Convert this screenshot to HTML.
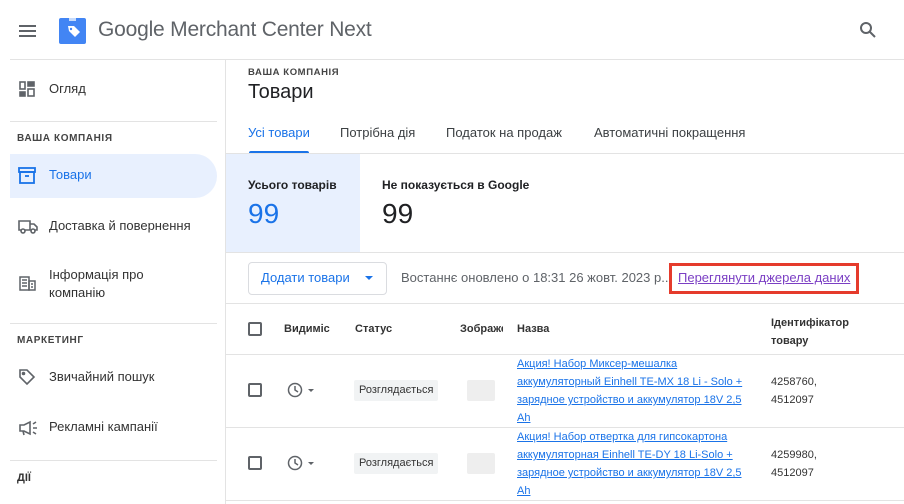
<!DOCTYPE html>
<html><head><meta charset="utf-8"><style>
*{margin:0;padding:0;box-sizing:border-box}
body{width:904px;height:504px;overflow:hidden;background:#fff;font-family:"Liberation Sans","DejaVu Sans",sans-serif;color:#3c4043;position:relative}
.a{position:absolute;white-space:nowrap}
.hl{position:absolute;height:1px;background:#e3e3e3}
.cap{font-size:10px;font-weight:bold;letter-spacing:.6px;color:#444}
.nav{font-size:13px;color:#333}
.ic{position:absolute}
.cb{position:absolute;width:14px;height:14px;border:2px solid #5f6368;border-radius:2px}
.th{font-size:11px;color:#333;font-weight:bold}
.lnk{font-size:11px;color:#1a73e8;text-decoration:underline;line-height:18px}
.chip{position:absolute;background:#f1f3f4;font-size:11px;color:#333;padding:0 5px;height:21px;line-height:21px;border-radius:2px}
.img{position:absolute;width:28px;height:21px;background:#eee;border-radius:2px}
</style></head><body>
<!-- header -->
<div class="a" style="left:19px;top:25px;width:17px;height:2px;background:#5f6368;box-shadow:0 5px 0 #5f6368,0 10px 0 #5f6368"></div>
<svg class="ic" style="left:59px;top:17px" width="27" height="27" viewBox="0 0 27 27"><rect x="0" y="1" width="27" height="26" rx="2" fill="#4285f4"/><rect x="10" y="1" width="7" height="3" fill="#fff" opacity=".7"/><path d="M9 9l6 0 6 6-5 5-6-6z" fill="#fff"/><circle cx="12" cy="12" r="1.2" fill="#4285f4"/></svg>
<div class="a" style="left:98px;top:18px;font-size:21px;letter-spacing:-0.2px;color:#5f6368">Google Merchant Center Next</div>
<svg class="ic" style="left:859px;top:21px" width="18" height="18" viewBox="0 0 18 18"><circle cx="7" cy="7" r="5" fill="none" stroke="#5f6368" stroke-width="2"/><path d="M11 11l5 5" stroke="#5f6368" stroke-width="2"/></svg>
<div class="hl" style="left:10px;top:59px;width:894px"></div>
<!-- sidebar -->
<div class="a" style="left:225px;top:60px;width:1px;height:444px;background:#e3e3e3"></div>
<svg class="ic" style="left:19px;top:81px" width="16" height="16" viewBox="0 0 16 16" fill="none" stroke="#5f6368" stroke-width="1.6"><rect x="1" y="1" width="5" height="7"/><rect x="9" y="1" width="6" height="4" fill="#5f6368"/><rect x="1" y="11" width="5" height="4" fill="#5f6368"/><rect x="9" y="8" width="6" height="7"/></svg>
<div class="a nav" style="left:49px;top:81px">Огляд</div>
<div class="hl" style="left:10px;top:121px;width:207px"></div>
<div class="a cap" style="left:17px;top:133px">ВАША КОМПАНІЯ</div>
<div class="a" style="left:10px;top:154px;width:207px;height:44px;background:#e8f0fe;border-radius:0 22px 22px 0"></div>
<svg class="ic" style="left:18px;top:167px" width="18" height="17" viewBox="0 0 18 17" fill="none" stroke="#1a73e8" stroke-width="1.8"><rect x="1" y="1" width="16" height="4"/><rect x="2" y="5" width="14" height="11"/><path d="M7 9h4"/></svg>
<div class="a nav" style="left:49px;top:167px;color:#1a73e8">Товари</div>
<svg class="ic" style="left:18px;top:219px" width="20" height="15" viewBox="0 0 20 15" fill="none" stroke="#5f6368" stroke-width="1.6"><path d="M1 2h11v9H1zM12 5h4l3 3v3h-7"/><circle cx="5" cy="12" r="2" fill="#fff"/><circle cx="15" cy="12" r="2" fill="#fff"/></svg>
<div class="a nav" style="left:49px;top:218px">Доставка й повернення</div>
<svg class="ic" style="left:19px;top:276px" width="17" height="15" viewBox="0 0 17 15" fill="none" stroke="#5f6368" stroke-width="1.5"><rect x="1" y="1" width="9" height="13"/><rect x="10" y="5" width="6" height="9"/><path d="M3 4h5M3 7h5M3 10h5M12 8h2M12 11h2"/></svg>
<div class="a nav" style="left:49px;top:266px;line-height:18px">Інформація про<br>компанію</div>
<div class="hl" style="left:10px;top:323px;width:207px"></div>
<div class="a cap" style="left:17px;top:335px">МАРКЕТИНГ</div>
<svg class="ic" style="left:18px;top:368px" width="18" height="18" viewBox="0 0 18 18" fill="none" stroke="#5f6368" stroke-width="1.6"><path d="M2 2h7l7 7-7 7-7-7z"/><circle cx="5.5" cy="5.5" r="1" fill="#5f6368"/></svg>
<div class="a nav" style="left:49px;top:369px">Звичайний пошук</div>
<svg class="ic" style="left:18px;top:420px" width="20" height="16" viewBox="0 0 20 16" fill="none" stroke="#5f6368" stroke-width="1.6"><path d="M2 5h4l6-3v12l-6-3H2zM5 11l1 4M15 4l3-2M15 8h4M15 12l3 2"/></svg>
<div class="a nav" style="left:49px;top:419px">Рекламні кампанії</div>
<div class="hl" style="left:10px;top:460px;width:207px"></div>
<div class="a nav" style="left:17px;top:472px;font-size:11px;font-weight:bold">ДІЇ</div>
<!-- main -->
<div class="a cap" style="left:248px;top:67px;font-size:9.5px">ВАША КОМПАНІЯ</div>
<div class="a" style="left:248px;top:81px;font-size:20px;color:#202124">Товари</div>
<div class="a" style="left:248px;top:125px;font-size:13px;color:#1a73e8">Усі товари</div>
<div class="a" style="left:249px;top:151px;width:60px;height:3px;background:#1a73e8;border-radius:2px 2px 0 0"></div>
<div class="a" style="left:340px;top:125px;font-size:13px">Потрібна дія</div>
<div class="a" style="left:446px;top:125px;font-size:13px">Податок на продаж</div>
<div class="a" style="left:594px;top:125px;font-size:13px">Автоматичні покращення</div>
<div class="hl" style="left:226px;top:153px;width:678px"></div>
<div class="a" style="left:226px;top:154px;width:134px;height:98px;background:#e8f0fe"></div>
<div class="a" style="left:248px;top:178px;font-size:12px;font-weight:bold;color:#202124">Усього товарів</div>
<div class="a" style="left:248px;top:198px;font-size:28px;color:#1a73e8">99</div>
<div class="a" style="left:382px;top:178px;font-size:12px;font-weight:bold;color:#202124">Не показується в Google</div>
<div class="a" style="left:382px;top:198px;font-size:28px;color:#202124">99</div>
<div class="hl" style="left:226px;top:252px;width:678px"></div>
<div class="a" style="left:248px;top:262px;width:139px;height:33px;border:1px solid #dadce0;border-radius:4px"></div>
<div class="a" style="left:261px;top:270px;font-size:13px;color:#1a73e8">Додати товари</div>
<div class="a" style="left:365px;top:276px;border:4px solid transparent;border-top-color:#1a73e8;border-bottom:0"></div>
<div class="a" style="left:401px;top:270px;font-size:13px;color:#5f6368">Востаннє оновлено о 18:31 26 жовт. 2023 р..</div>
<div class="a" style="left:669px;top:263px;width:190px;height:31px;border:3px solid #e53b2c"></div>
<div class="a" style="left:678px;top:270px;font-size:13px;color:#7b3fc4;text-decoration:underline">Переглянути джерела даних</div>
<div class="hl" style="left:226px;top:303px;width:678px"></div>
<div class="cb" style="left:248px;top:322px"></div>
<div class="a th" style="left:284px;top:323px">Видиміс</div>
<div class="a th" style="left:355px;top:323px">Статус</div>
<div class="a th" style="left:460px;top:323px;width:43px;overflow:hidden">Зображення</div>
<div class="a th" style="left:517px;top:323px">Назва</div>
<div class="a th" style="left:771px;top:314px;line-height:18px">Ідентифікатор<br>товару</div>
<div class="hl" style="left:226px;top:354px;width:678px"></div>
<div class="cb" style="left:248px;top:383px"></div>
<svg class="ic" style="left:287px;top:382px" width="30" height="16" viewBox="0 0 30 16" fill="none" stroke="#5f6368" stroke-width="1.5"><circle cx="8" cy="8" r="6.5"/><path d="M8 4v4l3 2"/><path d="M21 7h6l-3 3z" fill="#5f6368" stroke="none"/></svg>
<div class="chip" style="left:354px;top:380px">Розглядається</div>
<div class="img" style="left:467px;top:380px"></div>
<div class="a lnk" style="left:517px;top:355px">Акция! Набор Миксер-мешалка<br>аккумуляторный Einhell TE-MX 18 Li - Solo +<br>зарядное устройство и аккумулятор 18V 2,5<br>Ah</div>
<div class="a" style="left:771px;top:373px;font-size:11px;line-height:18px;color:#333">4258760,<br>4512097</div>
<div class="hl" style="left:226px;top:427px;width:678px"></div>
<div class="cb" style="left:248px;top:456px"></div>
<svg class="ic" style="left:287px;top:455px" width="30" height="16" viewBox="0 0 30 16" fill="none" stroke="#5f6368" stroke-width="1.5"><circle cx="8" cy="8" r="6.5"/><path d="M8 4v4l3 2"/><path d="M21 7h6l-3 3z" fill="#5f6368" stroke="none"/></svg>
<div class="chip" style="left:354px;top:453px">Розглядається</div>
<div class="img" style="left:467px;top:453px"></div>
<div class="a lnk" style="left:517px;top:428px">Акция! Набор отвертка для гипсокартона<br>аккумуляторная Einhell TE-DY 18 Li-Solo +<br>зарядное устройство и аккумулятор 18V 2,5<br>Ah</div>
<div class="a" style="left:771px;top:446px;font-size:11px;line-height:18px;color:#333">4259980,<br>4512097</div>
<div class="hl" style="left:226px;top:500px;width:678px"></div>
</body></html>
